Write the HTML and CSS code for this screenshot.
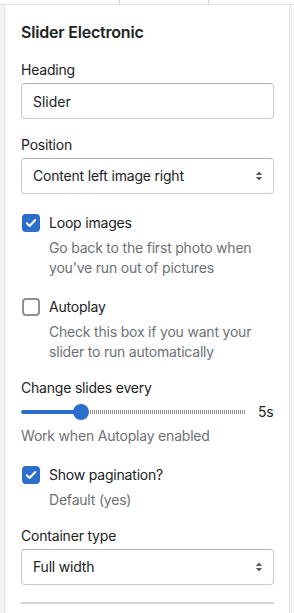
FILE: index.html
```html
<!DOCTYPE html>
<html lang="en">

<head>
    <meta charset="UTF-8">
    <meta name="viewport" content="width=device-width, initial-scale=1.0">
    <title>Slider Electronic</title>
    <link rel="stylesheet" href="styles.css">
</head>

<body>
    <div class="tabs" aria-hidden="true">
        <span class="tab"></span>
        <span class="tab"></span>
        <span class="tab"></span>
    </div>
    <aside class="panel">
        <h2 class="panel-title">Slider Electronic</h2>

        <div class="field">
            <label class="field-label" for="heading">Heading</label>
            <input class="text-input" id="heading" type="text" value="Slider">
        </div>

        <div class="field">
            <label class="field-label">Position</label>
            <div class="select">
                <span>Content left image right</span>
                <svg class="select-arrows" width="8" height="12" viewBox="0 0 8 12">
                    <path d="M4 1.5 7.2 5H.8z M4 10.5 7.2 7H.8z" fill="#5c5f62" />
                </svg>
            </div>
        </div>

        <div class="check">
            <div class="check-row">
                <span class="box checked">
                    <svg width="12" height="10" viewBox="0 0 12 10">
                        <path d="M1.8 5.2 4.6 8 10.2 2" fill="none" stroke="#fff" stroke-width="2" stroke-linecap="round" stroke-linejoin="round" />
                    </svg>
                </span>
                <span>Loop images</span>
            </div>
            <p class="check-help">Go back to the first photo when you've run out of pictures</p>
        </div>

        <div class="check">
            <div class="check-row">
                <span class="box"></span>
                <span>Autoplay</span>
            </div>
            <p class="check-help">Check this box if you want your slider to run automatically</p>
        </div>

        <div class="field">
            <label class="field-label">Change slides every</label>
            <div class="range">
                <div class="range-track">
                    <span class="range-fill"></span>
                    <span class="range-thumb"></span>
                    <span class="range-rest"></span>
                </div>
                <span class="range-value">5s</span>
            </div>
            <p class="help">Work when Autoplay enabled</p>
        </div>

        <div class="check">
            <div class="check-row">
                <span class="box checked">
                    <svg width="12" height="10" viewBox="0 0 12 10">
                        <path d="M1.8 5.2 4.6 8 10.2 2" fill="none" stroke="#fff" stroke-width="2" stroke-linecap="round" stroke-linejoin="round" />
                    </svg>
                </span>
                <span>Show pagination?</span>
            </div>
            <p class="check-help">Default (yes)</p>
        </div>

        <div class="field">
            <label class="field-label">Container type</label>
            <div class="select">
                <span>Full width</span>
                <svg class="select-arrows" width="8" height="12" viewBox="0 0 8 12">
                    <path d="M4 1.5 7.2 5H.8z M4 10.5 7.2 7H.8z" fill="#5c5f62" />
                </svg>
            </div>
        </div>

        <hr class="divider">
    </aside>
</body>

</html>
```

FILE: styles.css
```css
body,
body * {
    padding: 0;
    margin: 0;
    box-sizing: border-box;
}

body {
    font-family: 'Inter', 'Liberation Sans', sans-serif;
    font-size: 14px;
    line-height: 20px;
    letter-spacing: -0.2px;
    color: #202223;
    background-color: #f4f4f4;
    padding: 0 4px;
    height: 613px;
    overflow: hidden;
}

.tabs {
    display: grid;
    grid-template-columns: 119px 89px 1fr;
    height: 5px;
    margin: 0 -4px;
    border-bottom: 1px solid #e1e3e5;
    background-color: #fff;
}

.tab+.tab {
    border-left: 1px solid #d2d5d8;
}

.panel {
    background-color: #fff;
    border-left: 1px solid #e1e3e5;
    border-right: 1px solid #e1e3e5;
    height: 608px;
    padding: 15px 15px 0 16px;
    display: flex;
    flex-direction: column;
    gap: 16px;
}

.panel-title {
    font-size: 16px;
    font-weight: 600;
    line-height: 24px;
}

.field {
    display: flex;
    flex-direction: column;
}

.field-label {
    margin-bottom: 3px;
}

.text-input,
.select {
    height: 36px;
    border: 1px solid #c9cccf;
    border-top-color: #aeb4b9;
    border-radius: 4px;
    font: inherit;
    color: inherit;
    padding: 0 11px;
}

.select {
    display: flex;
    align-items: center;
    justify-content: space-between;
    padding-right: 10px;
}

.check {
    margin-top: 3px;
}

.check-row {
    display: flex;
    align-items: center;
    gap: 9px;
}

.box {
    width: 18px;
    height: 18px;
    margin-left: 1px;
    border: 2px solid #8c9196;
    border-radius: 4px;
    display: grid;
    place-items: center;
}

.box.checked {
    background-color: #2c6ecb;
    border-color: #2c6ecb;
}

.check-help {
    color: #6d7175;
    padding-left: 28px;
    margin-top: 5px;
}

.range {
    display: flex;
    align-items: center;
    gap: 12px;
    height: 24px;
    margin-top: -1px;
}

.range-track {
    flex: 1;
    display: flex;
    align-items: center;
}

.range-fill {
    width: 54px;
    height: 4px;
    border-radius: 2px 0 0 2px;
    background-color: #2c6ecb;
}

.range-thumb {
    width: 16px;
    height: 16px;
    margin-left: -2px;
    border-radius: 50%;
    background-color: #2c6ecb;
}

.range-rest {
    flex: 1;
    height: 4px;
    margin-left: 1px;
    background: repeating-linear-gradient(90deg, #8c9196 0 1px, transparent 1px 2px);
}

.range-value {
    width: 16px;
}

.help {
    color: #6d7175;
    margin-top: 2px;
}

.divider {
    border: 0;
    border-top: 2px solid #d2d5d8;
    margin-top: 1px;
}
```
